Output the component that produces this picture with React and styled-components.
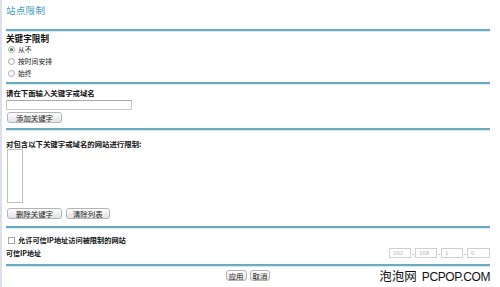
import React from "react";
import styled, { createGlobalStyle } from "styled-components";

const GlobalStyle = createGlobalStyle`
  html, body {
    margin: 0;
    padding: 0;
    background: #ffffff;
  }
  body {
    font-family: "Noto Sans CJK SC", "Liberation Sans", sans-serif;
    color: #111;
  }
`;

export const Page = styled.div`
  position: relative;
  width: 500px;
  height: 287px;
  overflow: hidden;
  box-sizing: border-box;
  border-left: 2px solid #dcdfee;
  padding-left: 4px;
`;

export const Body = styled.div`
  width: 484px;
  display: flex;
  flex-direction: column;
`;

export const Title = styled.h1`
  margin: 0;
  height: 24px;
  flex: none;
  padding-top: 4px;
  box-sizing: border-box;
  font-size: 9.5px;
  line-height: 12px;
  font-weight: normal;
  color: #3d9dc4;
  letter-spacing: 0.3px;
  overflow: visible;
`;

export const Rule = styled.div`
  flex: none;
  height: 2px;
  margin-top: ${(p) => p.$top || 0}px;
  background: #6aabc1;
  box-shadow: 0 1px 0 #d6ecf3;
`;

export const Section = styled.section`
  display: flex;
  flex-direction: column;
  padding-top: ${(p) => p.$pad || 0}px;
`;

export const Label = styled.div`
  flex: none;
  height: 10px;
  display: flex;
  align-items: center;
  font-size: ${(p) => p.$size || 7.4}px;
  font-weight: bold;
  white-space: nowrap;
`;

export const RadioRow = styled.label`
  flex: none;
  display: flex;
  align-items: center;
  gap: 3px;
  height: 12px;
  padding-left: 2px;
  font-size: 6.8px;
  color: #222;
`;

export const Radio = styled.span`
  width: 7px;
  height: 7px;
  border-radius: 50%;
  box-sizing: border-box;
  border: 1px solid #a9a9a9;
  background: #fafafa;
  display: flex;
  align-items: center;
  justify-content: center;
  &::after {
    content: "";
    width: 3px;
    height: 3px;
    border-radius: 50%;
    background: ${(p) => (p.$checked ? "#3a8a3a" : "transparent")};
  }
`;

export const TextBox = styled.div`
  flex: none;
  width: 126px;
  height: 10px;
  box-sizing: border-box;
  margin-top: ${(p) => p.$top || 0}px;
  border: 1px solid #c8c8c8;
  border-top-color: #a8a8a8;
  background: #fff;
`;

export const ListBox = styled.div`
  flex: none;
  width: 16px;
  height: 54px;
  box-sizing: border-box;
  margin-top: 1px;
  margin-left: 1px;
  border: 1px solid #c2c2c2;
  background: #fff;
`;

export const ButtonRow = styled.div`
  flex: none;
  display: flex;
  height: 11px;
  gap: ${(p) => p.$gap || 4}px;
  margin-top: ${(p) => p.$top || 0}px;
  justify-content: ${(p) => (p.$center ? "center" : "flex-start")};
  padding-left: ${(p) => p.$indent || 0}px;
`;

export const Button = styled.button`
  height: 11px;
  padding: 0 ${(p) => p.$px || 8}px;
  margin: 0;
  box-sizing: border-box;
  display: flex;
  align-items: center;
  border: 1px solid #b5b5b5;
  border-radius: 3px;
  background: linear-gradient(#fdfdfd, #e4e4e4);
  font-family: "Noto Sans CJK SC", "Liberation Sans", sans-serif;
  font-size: 7.4px;
  color: #222;
`;

export const CheckRow = styled.label`
  flex: none;
  display: flex;
  align-items: center;
  gap: 3px;
  padding-left: 2px;
  height: 10px;
  font-size: 7.2px;
  font-weight: bold;
`;

export const Check = styled.span`
  width: 7px;
  height: 7px;
  box-sizing: border-box;
  border: 1px solid #a7a7a7;
  background: #fff;
`;

export const IpRow = styled.div`
  flex: none;
  display: flex;
  align-items: center;
  justify-content: space-between;
  height: 12px;
  margin-top: 2px;
`;

export const IpGroup = styled.div`
  display: flex;
  align-items: center;
`;

export const IpField = styled.div`
  width: ${(p) => p.$w || 21}px;
  height: 10px;
  box-sizing: border-box;
  border: 1px solid #cfcfcf;
  font-family: "Liberation Sans", sans-serif;
  font-size: 6px;
  line-height: 8px;
  padding-left: 3px;
  color: #b8b8b8;
`;

export const IpDot = styled.span`
  width: 4px;
  height: 10px;
  text-align: center;
  font-family: "Liberation Sans", sans-serif;
  font-size: 8px;
  line-height: 10px;
  color: #444;
`;

export const Watermark = styled.div`
  position: absolute;
  right: 10px;
  bottom: 2px;
  display: flex;
  align-items: baseline;
  gap: 5px;
  font-family: "Noto Sans CJK SC", "Liberation Sans", sans-serif;
  font-size: 12.5px;
  line-height: 15px;
  color: #111;
  & span {
    font-family: "Liberation Sans", sans-serif;
    font-size: 12px;
    letter-spacing: -0.4px;
  }
`;

const ip = ["192", "168", "1", "0"];

export default function App() {
  return (
    <>
      <GlobalStyle />
      <Page>
        <Body>
          <Title>站点限制</Title>
          <Rule $top={5} />

          <Section $pad={2}>
            <Label $size={8.6}>关键字限制</Label>
            <RadioRow>
              <Radio $checked />
              从不
            </RadioRow>
            <RadioRow>
              <Radio />
              按时间安排
            </RadioRow>
            <RadioRow>
              <Radio />
              始终
            </RadioRow>
          </Section>
          <Rule $top={3} />

          <Section $pad={3}>
            <Label>请在下面输入关键字或域名</Label>
            <TextBox $top={3} />
            <ButtonRow $top={2} $indent={1}>
              <Button>添加关键字</Button>
            </ButtonRow>
          </Section>
          <Rule $top={5} />

          <Section $pad={8}>
            <Label>对包含以下关键字或域名的网站进行限制:</Label>
            <ListBox />
            <ButtonRow $top={5} $indent={1}>
              <Button>删除关键字</Button>
              <Button $px={6}>清除列表</Button>
            </ButtonRow>
          </Section>
          <Rule $top={7} />

          <Section $pad={7}>
            <CheckRow>
              <Check />
              允许可信IP地址访问被限制的网站
            </CheckRow>
            <IpRow>
              <Label $size={7}>可信IP地址</Label>
              <IpGroup>
                {ip.map((v, i) => (
                  <React.Fragment key={i}>
                    {i > 0 && <IpDot>.</IpDot>}
                    <IpField $w={i === 3 ? 23 : 22}>{v}</IpField>
                  </React.Fragment>
                ))}
              </IpGroup>
            </IpRow>
          </Section>
          <Rule $top={5} />

          <ButtonRow $top={4} $gap={3} $center>
            <Button $px={2}>应用</Button>
            <Button $px={2}>取消</Button>
          </ButtonRow>
        </Body>
        <Watermark>
          泡泡网<span>PCPOP.COM</span>
        </Watermark>
      </Page>
    </>
  );
}
